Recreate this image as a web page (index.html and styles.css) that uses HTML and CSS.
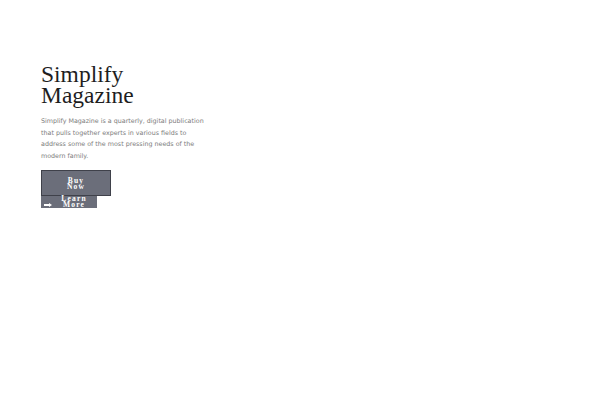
FILE: index.html
```html
<!DOCTYPE html>
<html>
<head>
<meta charset="utf-8">
<link rel="stylesheet" href="styles.css">
</head>
<body>
<div class="hero">
  <h1 class="title"><span class="tline">Simplify</span><span class="tline">Magazine</span></h1>
  <p class="desc">Simplify Magazine is a quarterly, digital publication that pulls together experts in various fields to address some of the most pressing needs of the modern family.</p>
  <div class="actions">
    <a class="btn btn-buy"><span class="bl">Buy</span><span class="bl">Now</span></a>
    <a class="btn btn-learn"><svg class="arrow" width="8" height="4" viewBox="0 0 8 4"><rect x="0" y="1" width="6" height="2" fill="#fff"/><path d="M5 0 L8 2 L5 4 Z" fill="#fff"/></svg><span class="learn-text"><span class="bl">Learn</span><span class="bl">More</span></span></a>
  </div>
</div>
</body>
</html>
```
FILE: styles.css
```css
html, body { margin: 0; padding: 0; background: #fff; }
.hero { padding: 64px 0 0 41px; width: 170px; }
.title {
  margin: 0;
  font-family: "Liberation Serif", serif;
  font-weight: normal;
  font-size: 23.5px;
  line-height: 21px;
  color: #1e1e1e;
}
.tline { display: block; }
.desc {
  margin: 9px 0 0 0;
  font-family: "DejaVu Sans", sans-serif;
  font-size: 6.35px;
  line-height: 11.7px;
  color: #7d7d7d;
  width: 164px;
}
.actions { margin-top: 8px; display: flex; flex-direction: column; align-items: flex-start; }
.btn {
  display: block;
  box-sizing: border-box;
  background: #6b6e7a;
  color: #fff;
  font-family: "Liberation Serif", serif;
  font-weight: bold;
  font-size: 7.5px;
  line-height: 6px;
  letter-spacing: 1.2px;
  text-align: center;
}
.bl { display: block; height: 6px; }
.btn-buy { width: 70px; height: 26px; border: 1px solid #3f414a; padding-top: 7px; }
.btn-learn { width: 56px; height: 12px; position: relative; padding-top: 0; }
.learn-text { display: block; margin-left: 10px; }
.arrow { position: absolute; left: 3px; top: 7px; }
```
